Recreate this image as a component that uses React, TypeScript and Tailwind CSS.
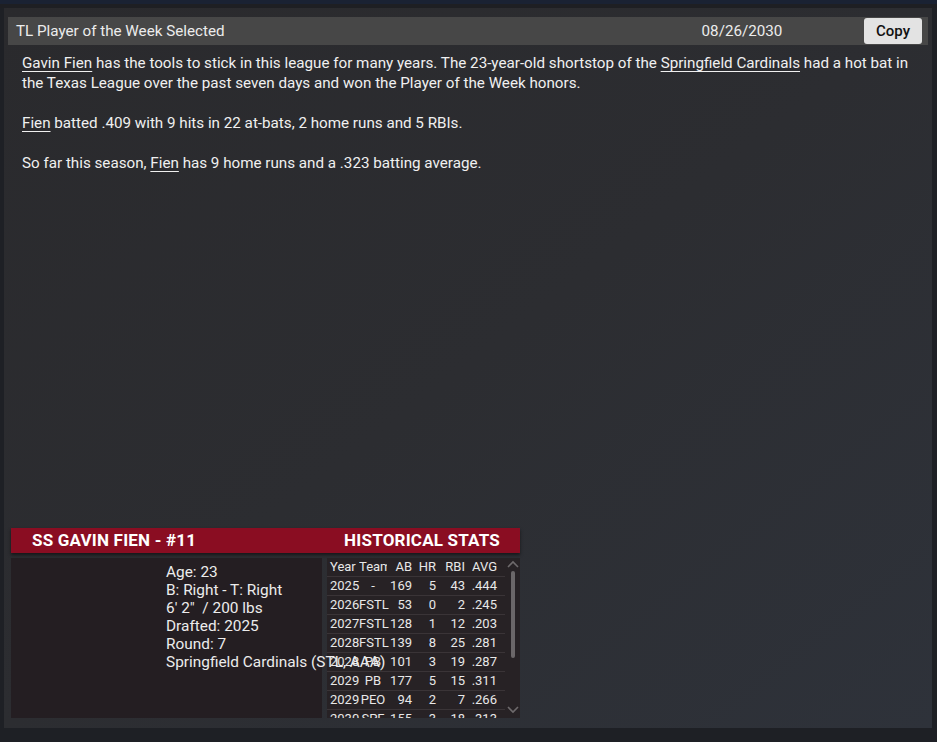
/*
 * News item — player of the week, with player card and historical stats
 */

const stats = [
  { year: "2025", team: "-", ab: 169, hr: 5, rbi: 43, avg: ".444" },
  { year: "2026", team: "FSTL", ab: 53, hr: 0, rbi: 2, avg: ".245" },
  { year: "2027", team: "FSTL", ab: 128, hr: 1, rbi: 12, avg: ".203" },
  { year: "2028", team: "FSTL", ab: 139, hr: 8, rbi: 25, avg: ".281" },
  { year: "2028", team: "PB", ab: 101, hr: 3, rbi: 19, avg: ".287" },
  { year: "2029", team: "PB", ab: 177, hr: 5, rbi: 15, avg: ".311" },
  { year: "2029", team: "PEO", ab: 94, hr: 2, rbi: 7, avg: ".266" },
  { year: "2030", team: "SPF", ab: 155, hr: 3, rbi: 18, avg: ".313" },
];

const font = "font-['Roboto','Liberation_Sans',sans-serif]";

function Link({ children }: { children: React.ReactNode }) {
  return <span className="underline underline-offset-[3px] decoration-1">{children}</span>;
}

export default function App() {
  return (
    <div className={`w-[937px] h-[742px] overflow-hidden bg-[#1e2025] ${font} flex flex-col`}>
      {/* top strip */}
      <div className="h-[4px] bg-[#1a2233]" />
      <div className="h-[4px] bg-[#1e1f23]" />

      {/* ── Main panel ── */}
      <div className="ml-[4px] w-[928px] h-[720px] bg-gradient-to-br from-[#2a2a2d] via-[#2c2d31] to-[#2e323a] flex flex-col pt-[9px]">
        {/* header bar */}
        <div className="mx-[4px] h-[28px] bg-[#474747] flex items-center pl-[8px] pr-[6px] text-[#ececec] text-[15.2px]">
          <div className="flex-1">TL Player of the Week Selected</div>
          <div className="w-[120px] text-center mr-[62px]">08/26/2030</div>
          <button className="w-[58px] h-[26px] rounded-[3px] bg-[#e3e3e3] text-[#111] text-[15px] font-medium">
            Copy
          </button>
        </div>

        {/* article */}
        <div className="px-[18px] pt-[8px] text-[15.2px] leading-[20px] text-[#f0f0f0] flex flex-col gap-[20px]">
          <p>
            <Link>Gavin Fien</Link> has the tools to stick in this league for many years. The 23-year-old shortstop of the{" "}
            <Link>Springfield Cardinals</Link> had a hot bat in the Texas League over the past seven days and won the Player of the Week honors.
          </p>
          <p>
            <Link>Fien</Link> batted .409 with 9 hits in 22 at-bats, 2 home runs and 5 RBIs.
          </p>
          <p>
            So far this season, <Link>Fien</Link> has 9 home runs and a .323 batting average.
          </p>
        </div>

        <div className="flex-1" />

        {/* ── Player card ── */}
        <div className="ml-[7px] w-[509px] mb-[10px] flex flex-col">
          <div className="h-[25px] bg-[#8a0d22] flex items-center justify-between pl-[21px] pr-[20px] text-white font-bold text-[17px] tracking-[0.2px] shadow-[0_2px_3px_rgba(0,0,0,0.5)]">
            <span>SS GAVIN FIEN - #11</span>
            <span>HISTORICAL STATS</span>
          </div>
          <div className="h-[160px] mt-[5px] flex">
            {/* photo + info */}
            <div className="w-[311px] shrink-0 bg-[#241e22] flex">
              <div className="w-[155px] shrink-0" />
              <div className="pt-[5px] text-[15.4px] leading-[18px] text-[#ececec] whitespace-nowrap relative z-10">
                <div>Age: 23</div>
                <div>B: Right - T: Right</div>
                <div>6' 2"&nbsp; / 200 lbs</div>
                <div>Drafted: 2025</div>
                <div>Round: 7</div>
                <div>Springfield Cardinals (STL, AAA)</div>
              </div>
            </div>
            {/* stats table */}
            <div className="ml-[5px] w-[193px] shrink-0 bg-[#272225] flex">
              <div className="w-[178px] overflow-hidden text-[13px] text-[#e8e8e8]">
                <div className="h-[19px] flex items-center px-[3px] border-b border-[#3a3437]">
                  <span className="w-[29px]">Year</span>
                  <span className="w-[28px] overflow-hidden whitespace-nowrap">Team</span>
                  <span className="w-[25px] text-right">AB</span>
                  <span className="w-[24px] text-right">HR</span>
                  <span className="w-[29px] text-right">RBI</span>
                  <span className="w-[32px] text-right">AVG</span>
                </div>
                {stats.map((s, i) => (
                  <div key={i} className="h-[19px] flex items-center px-[3px] border-b border-[#3a3437]">
                    <span className="w-[29px]">{s.year}</span>
                    <span className="w-[28px] text-center">{s.team}</span>
                    <span className="w-[25px] text-right">{s.ab}</span>
                    <span className="w-[24px] text-right">{s.hr}</span>
                    <span className="w-[29px] text-right">{s.rbi}</span>
                    <span className="w-[32px] text-right">{s.avg}</span>
                  </div>
                ))}
              </div>
              {/* scrollbar */}
              <div className="w-[15px] flex flex-col items-center pt-[2px] pb-[4px]">
                <svg width="12" height="8" viewBox="0 0 12 8">
                  <path d="M1 7 L6 2 L11 7" stroke="#6e6a6c" strokeWidth="1.6" fill="none" />
                </svg>
                <div className="mt-[3px] w-[4px] h-[87px] rounded-full bg-[#6b6769]" />
                <div className="flex-1" />
                <svg width="12" height="8" viewBox="0 0 12 8">
                  <path d="M1 1 L6 6 L11 1" stroke="#6e6a6c" strokeWidth="1.6" fill="none" />
                </svg>
              </div>
            </div>
          </div>
        </div>
      </div>
    </div>
  );
}
